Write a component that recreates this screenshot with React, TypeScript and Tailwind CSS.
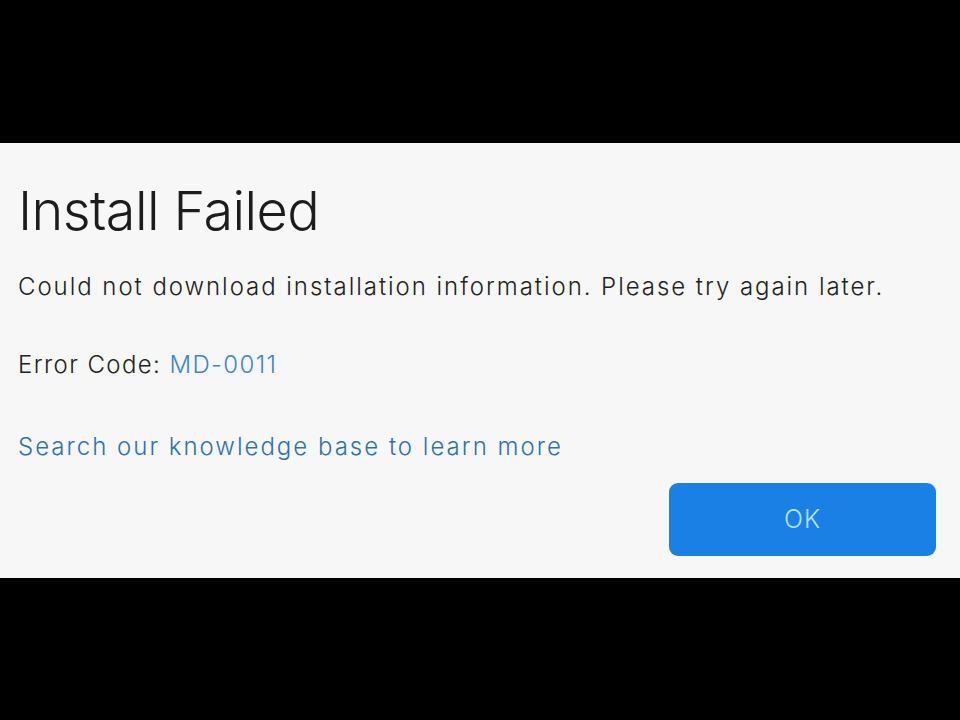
import React from 'react';

function App() {
  return (
    <div className="w-[960px] h-[720px] bg-black flex flex-col" style={{ fontFamily: 'Inter, "Noto Sans", sans-serif' }}>
      <div className="h-[143px]"></div>

      {/* Dialog panel */}
      <div className="h-[435px] bg-[#f7f7f7] flex flex-col px-[18px] pt-[36px]">
        <h1 className="text-[54px] leading-[64px] font-light text-[#1c1c1c] tracking-[-0.6px]">Install Failed</h1>
        <p className="mt-[28px] text-[24px] leading-[32px] font-light text-[#222] tracking-[1.95px]">
          Could not download installation information. Please try again later.
        </p>
        <p className="mt-[46px] text-[24px] leading-[32px] font-light text-[#222] tracking-[1.4px]">
          Error Code: <span className="text-[#3d86c6]">MD-0011</span>
        </p>
        <a className="mt-[50px] text-[24px] leading-[32px] font-light text-[#2f72a8] tracking-[2px]">
          Search our knowledge base to learn more
        </a>
        <div className="flex justify-end pr-[6px] mt-[20px]">
          <button className="w-[267px] h-[73px] rounded-[9px] bg-[#1a80e6] text-[25px] font-light text-[#b5e4ff] tracking-[1px]">
            OK
          </button>
        </div>
      </div>

      <div className="flex-1"></div>
    </div>
  );
}

export default App;
